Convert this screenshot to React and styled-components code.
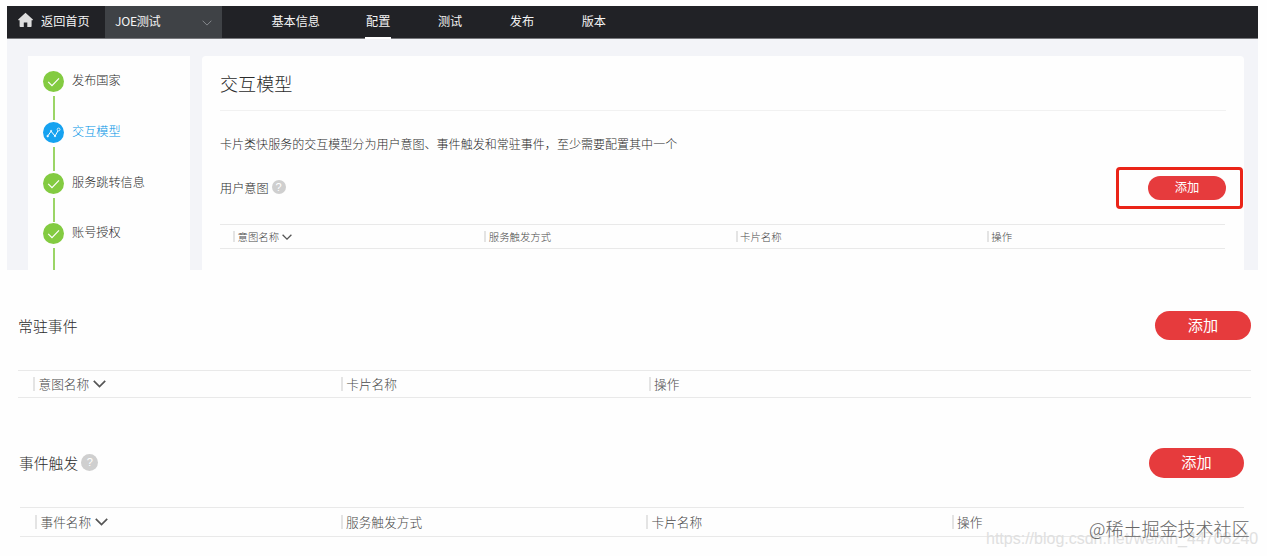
import React from "react";
import styled, { createGlobalStyle } from "styled-components";

const GlobalStyle = createGlobalStyle`
  * {
    box-sizing: border-box;
  }
  body {
    margin: 0;
    background: #fefefe;
    font-family: "Noto Sans CJK SC", sans-serif;
    font-weight: 300;
    color: #2b2b2b;
  }
`;

const Page = styled.div`
  position: relative;
  width: 1267px;
  height: 556px;
  overflow: hidden;
  padding: 6px 9px 0 7px;
`;

const Console = styled.div`
  height: 264px;
  background: #f3f4f8;
  overflow: hidden;
`;

const NavBar = styled.nav`
  display: flex;
  align-items: stretch;
  height: 33px;
  background: #212226;
  border-bottom: 1px solid #77787c;
  color: #f4f4f4;
  font-size: 12.15px;
  font-weight: 400;
  line-height: 30px;
`;

const Home = styled.div`
  display: flex;
  width: 98px;
  padding-left: 11px;
  gap: 8px;

  svg {
    margin-top: 6px;
  }
`;

const Project = styled.div`
  display: flex;
  justify-content: space-between;
  width: 117px;
  padding: 0 10px 0 10px;
  background: #3f4246;

  svg {
    margin-top: 14px;
  }
`;

const ProjectName = styled.span`
  letter-spacing: -0.3px;
`;

const NavItems = styled.div`
  display: flex;
  gap: 45.6px;
  margin-left: 47.4px;
`;

const NavItem = styled.div`
  height: 33px;
  padding: 0 1px;
  border-bottom: 2px solid ${props => (props.$active ? "#fff" : "transparent")};

  &:first-child {
    padding: 0 0 0 2px;
    margin-right: -0.5px;
  }
`;

const Body = styled.div`
  display: flex;
  align-items: stretch;
  gap: 12px;
  height: 231px;
  padding: 17px 14px 0 21px;
`;

const Steps = styled.div`
  width: 162px;
  padding: 15px 0 0 15px;
  background: #fefefe;
  overflow: hidden;
`;

const Step = styled.div`
  display: grid;
  grid-template-columns: 21px 1fr;
  column-gap: 8px;
  height: 50.8px;
  color: ${props => (props.$active ? "#0094e6" : "#2b2b2b")};
  font-size: 12.15px;
  line-height: 18px;
`;

const StepMark = styled.div`
  display: flex;
  flex-direction: column;
  align-items: center;
  gap: 4px;

  svg {
    flex: none;
  }
`;

const StepLine = styled.div`
  width: 2px;
  height: 24px;
  margin-left: 1px;
  background: #9bd566;
`;

const Panel = styled.main`
  flex: 1;
  padding: 0 18px;
  background: #fefefe;
  border-radius: 4px 4px 0 0;
`;

const PanelTitle = styled.h1`
  margin: 0;
  height: 55px;
  border-bottom: 1px solid #f1f1f1;
  font-size: 18.1px;
  font-weight: 300;
  line-height: 55px;
`;

const Intro = styled.p`
  margin: 23px 0 0;
  font-size: 12.04px;
  line-height: 20px;
`;

const SectionHead = styled.div`
  display: flex;
  align-items: center;
  justify-content: space-between;
  height: ${props => props.$height};
`;

const SectionTitle = styled.h2`
  display: flex;
  align-items: center;
  gap: 3px;
  margin: 0;
  font-size: ${props => props.$size};
  font-weight: 300;
  line-height: 20px;
`;

const Help = styled.span`
  width: ${props => props.$size};
  height: ${props => props.$size};
  margin-top: -2px;
  border-radius: 50%;
  background: #cfcfcf;
  color: #fff;
  font: 400 11px/${props => props.$size} "Liberation Sans", sans-serif;
  text-align: center;
`;

const AddButton = styled.button`
  width: ${props => props.$width || "95px"};
  height: ${props => props.$height || "30px"};
  padding: 0 0 2px;
  border: 0;
  border-radius: 15px;
  background: #e63b3d;
  color: #fff;
  font-family: inherit;
  font-size: ${props => props.$size || "15.2px"};
  line-height: 1;
`;

const Highlight = styled.div`
  display: flex;
  align-items: center;
  justify-content: flex-end;
  width: 127px;
  height: 42px;
  margin-right: -18px;
  padding-right: 14px;
  border: 3px solid #ea2418;
  border-radius: 4px;
`;

const HeaderRow = styled.div`
  display: grid;
  grid-template-columns: repeat(4, 1fr);
  align-items: center;
  height: ${props => props.$height};
  padding-left: ${props => (props.$small ? "0" : "2px")};
  border-top: 1px solid #e9e9e9;
  border-bottom: 1px solid #e9e9e9;
  color: #4a4a4a;
  font-size: ${props => (props.$small ? "10.4px" : "12.7px")};
  line-height: 18px;
`;

const HeaderCell = styled.div`
  display: flex;
  align-items: center;
  gap: ${props => (props.$small ? "2.5px" : "3.5px")};
  margin-left: 13px;

  &::before {
    content: "";
    width: 2px;
    height: 1.05em;
    background: #e4e4e4;
  }
`;

const Section = styled.section`
  width: ${props => props.$width};
  margin: ${props => props.$margin};
`;

const Author = styled.div`
  position: absolute;
  left: 1089px;
  top: 515px;
  color: #666;
  font-size: 18.05px;
  line-height: 26px;
  white-space: nowrap;
`;

const BlogUrl = styled.div`
  position: absolute;
  left: 986px;
  top: 529px;
  color: #e0e0e0;
  font: 400 16px/20px "Liberation Sans", sans-serif;
  white-space: nowrap;
`;

const Chevron = ({ size = 10, color = "#555", stroke = 1.3 }) => (
  <svg width={size} height={size * 0.6} viewBox="0 0 10 6" fill="none">
    <path d="M0.6 0.7 5 5.1 9.4 0.7" stroke={color} strokeWidth={stroke} />
  </svg>
);

const HomeIcon = () => (
  <svg width="15" height="16" viewBox="0 0 15 16" fill="#dedede">
    <path d="M7.5 0.8 14.9 7.4q.3.9-.7.9h-.6v5.9q0 .8-.8.8H9.3v-4.4H5.8V15H2.4q-.8 0-.8-.8V8.3H.9q-1 0-.7-.9z" />
  </svg>
);

const DoneIcon = () => (
  <svg width="21" height="21" viewBox="0 0 21 21" fill="none">
    <circle cx="10.5" cy="10.5" r="10.5" fill="#83cb41" />
    <path d="M5.2 10.8 9 14.6 16 7.4" stroke="#fff" strokeWidth="1.2" />
  </svg>
);

const ModelIcon = () => (
  <svg width="21" height="21" viewBox="0 0 21 21" fill="none" stroke="#fff">
    <circle cx="10.5" cy="10.5" r="10.5" fill="#16a2f0" stroke="none" />
    <path d="M5 13.6 8.1 9.3 12 14 15 8.8" strokeWidth="1" />
    <circle cx="4.7" cy="14.1" r="0.9" fill="#fff" strokeWidth="0.5" />
    <circle cx="8.1" cy="8.9" r="0.7" fill="#fff" strokeWidth="0.5" />
    <circle cx="12" cy="14.2" r="0.7" fill="#fff" strokeWidth="0.5" />
    <circle cx="15.6" cy="7.5" r="1.4" strokeWidth="0.8" />
  </svg>
);

const Columns = ({ names, small, height }) => (
  <HeaderRow $small={small} $height={height}>
    {names.map((name, i) => (
      <HeaderCell key={name} $small={small}>
        {name}
        {i === 0 && <Chevron size={small ? 10 : 13} />}
      </HeaderCell>
    ))}
  </HeaderRow>
);

const navItems = ["基本信息", "配置", "测试", "发布", "版本"];
const steps = ["发布国家", "交互模型", "服务跳转信息", "账号授权"];

const App = () => (
  <Page>
    <GlobalStyle />
    <Console>
      <NavBar>
        <Home>
          <HomeIcon />
          返回首页
        </Home>
        <Project>
          <ProjectName>JOE测试</ProjectName>
          <Chevron color="#85888c" stroke={1} />
        </Project>
        <NavItems>
          {navItems.map(item => (
            <NavItem key={item} $active={item === "配置"}>
              {item}
            </NavItem>
          ))}
        </NavItems>
      </NavBar>
      <Body>
        <Steps>
          {steps.map(step => (
            <Step key={step} $active={step === "交互模型"}>
              <StepMark>
                {step === "交互模型" ? <ModelIcon /> : <DoneIcon />}
                <StepLine />
              </StepMark>
              {step}
            </Step>
          ))}
        </Steps>
        <Panel>
          <PanelTitle>交互模型</PanelTitle>
          <Intro>
            卡片类快服务的交互模型分为用户意图、事件触发和常驻事件，至少需要配置其中一个
          </Intro>
          <Section $margin="13px 0 0" $width="1005px">
            <SectionHead $height="42px">
              <SectionTitle $size="12.15px">
                用户意图<Help $size="14px">?</Help>
              </SectionTitle>
              <Highlight>
                <AddButton $width="78px" $height="24px" $size="12.3px">
                  添加
                </AddButton>
              </Highlight>
            </SectionHead>
            <Section $margin="15px 0 0">
              <Columns
                small
                height="25px"
                names={["意图名称", "服务触发方式", "卡片名称", "操作"]}
              />
            </Section>
          </Section>
        </Panel>
      </Body>
    </Console>
    <Section $margin="41px 0 0 11px" $width="1233px">
      <SectionHead $height="29px">
        <SectionTitle $size="14.9px">常驻事件</SectionTitle>
        <AddButton $width="96px" $height="29px">
          添加
        </AddButton>
      </SectionHead>
      <Section $margin="30px 0 0">
        <Columns height="28px" names={["意图名称", "卡片名称", "操作"]} />
      </Section>
    </Section>
    <Section $margin="50px 0 0 12px" $width="1225px">
      <SectionHead $height="30px">
        <SectionTitle $size="14.8px">
          事件触发<Help $size="17px">?</Help>
        </SectionTitle>
        <AddButton>添加</AddButton>
      </SectionHead>
      <Section $margin="29px 0 0 1px">
        <Columns
          height="30px"
          names={["事件名称", "服务触发方式", "卡片名称", "操作"]}
        />
      </Section>
    </Section>
    <BlogUrl>https://blog.csdn.net/weixin_44708240</BlogUrl>
    <Author>@稀土掘金技术社区</Author>
  </Page>
);

export default App;
